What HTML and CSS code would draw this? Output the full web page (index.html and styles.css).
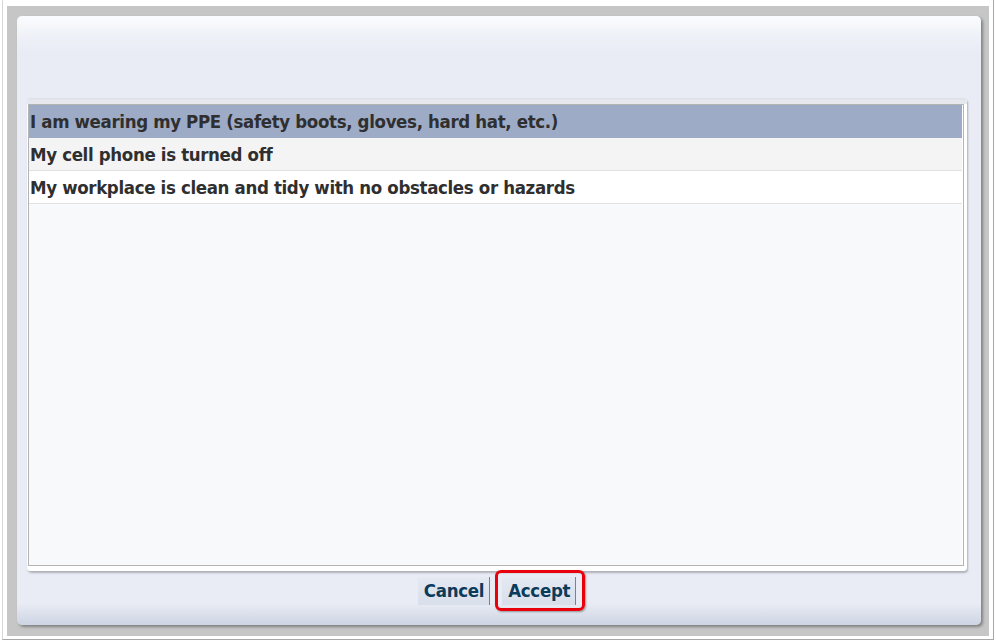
FILE: index.html
```html
<!DOCTYPE html>
<html>
<head>
<meta charset="utf-8">
<link rel="stylesheet" href="styles.css">
</head>
<body>
<div class="frame">
  <div class="backdrop">
    <div class="panel">
      <div class="listwrap">
        <div class="list">
          <div class="row selected">I am wearing my PPE (safety boots, gloves, hard hat, etc.)</div>
          <div class="row alt">My cell phone is turned off</div>
          <div class="row">My workplace is clean and tidy with no obstacles or hazards</div>
        </div>
      </div>
      <div class="buttons">
        <button class="btn">Cancel</button>
        <div class="accept-wrap">
          <button class="btn">Accept</button>
          <div class="highlight"></div>
        </div>
      </div>
    </div>
  </div>
</div>
</body>
</html>
```
FILE: styles.css
```css
* { box-sizing: border-box; }
html, body { margin: 0; padding: 0; background: #ffffff; }
body { font-family: "DejaVu Sans Condensed", "DejaVu Sans", sans-serif; }

.frame {
  margin-left: 2px;
  width: 992px;
  height: 640px;
  border-left: 1px solid #d6d6d6;
  border-right: 1px solid #a8a8a8;
  border-bottom: 1px solid #a8a8a8;
  padding: 6px 4px 3px 4px;
  background: #ffffff;
}

.backdrop {
  height: 100%;
  background: #c6c6c6;
  padding: 10px 8px 11px 10px;
}

.panel {
  height: 100%;
  border-radius: 5px;
  background: linear-gradient(to bottom, #fbfcfe 0px, #eef1f7 20px, #e9ecf5 36px, #e9ecf5 calc(100% - 22px), #dce1ec calc(100% - 12px), #cdd4e3 100%);
  box-shadow: 2px 2px 3px rgba(0,0,0,0.35);
  padding: 82px 14px 0 10px;
  display: flex;
  flex-direction: column;
}

.listwrap {
  height: 473px;
  border-radius: 4px;
  background: linear-gradient(to bottom, #d9dde5 0px, #e6e8ee 2px, #e6e8ee 6px, #ffffff 6px);
  box-shadow: 1px 2px 2px rgba(0,0,0,0.25);
  padding: 6px 3px 5px 1px;
  display: flex;
}

.list {
  flex: 1;
  border: 1px solid #b4b4b4;
  background: #f8f9fa;
  padding-right: 1px;
  box-shadow: inset -1px 0 0 #ffffff;
}

.row {
  height: 33px;
  padding-left: 1px;
  padding-top: 1px;
  font-weight: bold;
  font-size: 18.5px;
  letter-spacing: -0.35px;
  line-height: 32px;
  color: #2f2f2f;
  background: #ffffff;
  border-bottom: 1px solid #e2e2e2;
  white-space: nowrap;
}
.row.selected {
  background: #9dabc7;
  border-bottom-color: #9dabc7;
}
.row.alt {
  background: #f4f4f4;
}

.buttons {
  display: flex;
  justify-content: center;
  align-items: flex-start;
  gap: 12px;
  padding-top: 6px;
}

.btn {
  height: 28px;
  padding: 0 5px 0 6px;
  border: none;
  border-right: 1px solid #7d828a;
  background: linear-gradient(to bottom, #e4e9f2, #d8dfeb);
  font-family: "DejaVu Sans Condensed", "DejaVu Sans", sans-serif;
  font-weight: bold;
  font-size: 18.5px;
  letter-spacing: -0.3px;
  color: #0c3a5b;
  line-height: 28px;
}

.accept-wrap {
  position: relative;
}

.highlight {
  position: absolute;
  left: -7px;
  top: -7px;
  right: -9px;
  bottom: -6px;
  border: 3px solid #e8000b;
  border-radius: 6px;
  box-shadow: 1px 1px 2px rgba(0,0,0,0.35);
}
```
